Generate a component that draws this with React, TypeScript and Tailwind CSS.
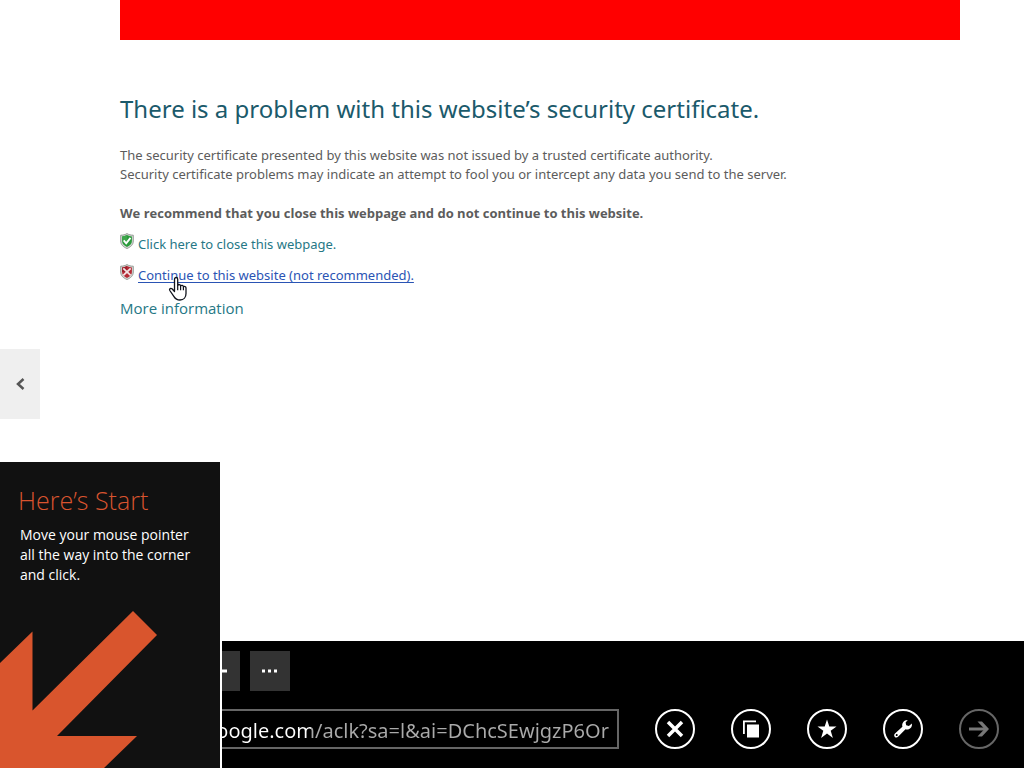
import type { ReactNode } from "react";

function ShieldIcon({ kind }: { kind: "ok" | "bad" }) {
  const ok = kind === "ok";
  return (
    <svg viewBox="0 0 14 16" className="-mt-0.5 h-4 w-3.5 shrink-0" aria-hidden="true">
      <path d="M7 .6C5 1.8 3 2.2.7 2.2V8c0 3.600 2.400 5.900 6.300 7.500 3.900-1.600 6.300-3.900 6.300-7.500V2.200C11 2.200 9 1.800 7 .6Z" fill="#d4d8d4" stroke="#8d938d" strokeWidth=".9" />
      <path d="M7 2.100C5.400 3 3.800 3.400 2.100 3.500V8c0 2.800 1.800 4.600 4.900 5.900 3.100-1.300 4.900-3.100 4.900-5.900V3.500C10.200 3.400 8.600 3 7 2.100Z" fill={ok ? "#2b9a3c" : "#b52a35"} />
      <path d="M7 2.100C5.400 3 3.800 3.400 2.100 3.500V8H7Z" fill={ok ? "#3ea64b" : "#9d1f2b"} />
      {ok ? (
        <path d="m3.700 7.400 2.500 2.900 4.300-5.500" fill="none" stroke="#fff" strokeWidth="1.900" />
      ) : (
        <path d="m3.300 4.300 7.400 7M10.700 4.300l-7.400 7" fill="none" stroke="#f3e4e4" strokeWidth="1.800" />
      )}
    </svg>
  );
}

function HandCursor() {
  return (
    <svg viewBox="0 0 20 26" className="absolute top-2.5 left-[30px] h-[26px] w-5" aria-hidden="true">
      <path
        d="M6.500 15.500V3.200c0-2.300 3.200-2.300 3.200 0v6.300c.6-1.500 2.800-1.200 2.900.4.900-1.100 2.700-.6 2.800.9 1-.8 2.600-.1 2.600 1.300v5.300c0 3.800-2.200 6.600-6 6.600-3 0-4.700-1.200-6-3.400l-4.200-6.100c-.9-1.600 1-2.800 2.200-1.700Z"
        fill="#fff"
        stroke="#10131c"
        strokeWidth="1.300"
        strokeLinejoin="round"
      />
      <path d="M9.700 9.500v4.700M12.600 10v4.200M15.400 11v3.200" stroke="#10131c" strokeWidth="1.200" />
    </svg>
  );
}

function RoundButton({ label, disabled, children }: { label: string; disabled?: boolean; children: ReactNode }) {
  return (
    <button
      type="button"
      aria-label={label}
      disabled={disabled}
      className="flex size-10 shrink-0 items-center justify-center rounded-full border-2 border-white text-white disabled:border-[#666] disabled:text-[#777]"
    >
      <svg viewBox="0 0 20 20" className="size-5" aria-hidden="true">
        {children}
      </svg>
    </button>
  );
}

function StartTip() {
  return (
    <aside className="absolute bottom-0 left-0 h-[306px] w-[222px] overflow-hidden border-r-2 border-white bg-[#111] text-white">
      <div className="px-5 pt-5">
        <h2 className="-ml-0.5 text-[25px] leading-9 font-light text-[#d9542f]">Here’s Start</h2>
        <p className="mt-[7px] text-sm leading-5">
          Move your mouse pointer
          <br />
          all the way into the corner
          <br />
          and click.
        </p>
      </div>
      <svg viewBox="0 0 160 157" className="absolute bottom-0 left-0 h-[157px] w-40" aria-hidden="true">
        <path d="M133 0 157 24 57 125h80l-33 32H0V52l32.500-31.500v79Z" fill="#d9552d" />
      </svg>
    </aside>
  );
}

export default function App() {
  return (
    <div className="relative flex min-h-screen flex-col bg-white font-['Open_Sans','Noto_Sans',sans-serif]">
      <main className="flex-1 pr-16 pl-[120px] font-['Noto_Sans','Open_Sans',sans-serif] text-[13px] text-[#5c5c5c]">
        <div className="h-10 bg-[#ff0000]" />
        <h1 className="mt-[49px] text-2xl leading-10 font-normal text-[#1b5a6b]">
          There is a problem with this website’s security certificate.
        </h1>
        <p className="mt-[17px] leading-[19px]">
          The security certificate presented by this website was not issued by a trusted certificate authority.
          <br />
          Security certificate problems may indicate an attempt to fool you or intercept any data you send to the server.
        </p>
        <p className="mt-5 font-['Open_Sans','Noto_Sans',sans-serif] leading-[19px] font-bold">
          We recommend that you close this webpage and do not continue to this website.
        </p>
        <ul className="mt-3 flex flex-col gap-3">
          <li className="flex gap-1 leading-[19px]">
            <ShieldIcon kind="ok" />
            <a href="#close" className="text-[#267886]">Click here to close this webpage.</a>
          </li>
          <li className="flex gap-1 leading-[19px]">
            <ShieldIcon kind="bad" />
            <span className="relative">
              <a href="#continue" className="text-[#2a54b4] underline underline-offset-2">
                Continue to this website (not recommended).
              </a>
              <HandCursor />
            </span>
          </li>
        </ul>
        <a href="#more" className="mt-[11px] inline-block font-['Open_Sans','Noto_Sans',sans-serif] text-[15px] leading-6 text-[#267886]">
          More information
        </a>
      </main>

      <button
        type="button"
        aria-label="Back"
        className="absolute top-1/2 left-0 flex h-[70px] w-10 -translate-y-1/2 items-center justify-center bg-[#efefef]"
      >
        <svg viewBox="0 0 10 12" className="h-3 w-2.5" aria-hidden="true">
          <path d="M8.500 1 3 6l5.500 5" fill="none" stroke="#555" strokeWidth="2.500" />
        </svg>
      </button>

      <footer className="bg-black pt-2.5 pr-[25px] pb-[19px] pl-[200px]">
        <div className="flex gap-2.5">
          <button type="button" aria-label="New tab" className="flex size-10 items-center justify-center bg-[#333]">
            <svg viewBox="0 0 14 14" className="size-3.5" aria-hidden="true">
              <path d="M0 7h14M7 0v14" stroke="#fff" strokeWidth="3" />
            </svg>
          </button>
          <button type="button" aria-label="Tab tools" className="flex size-10 items-center justify-center bg-[#333]">
            <svg viewBox="0 0 16 4" className="h-1 w-4" aria-hidden="true">
              <path d="M0 .5h3v3H0zM6 .5h3v3H6zM12 .5h3v3h-3z" fill="#fff" />
            </svg>
          </button>
        </div>
        <div className="mt-[18px] flex items-center gap-9">
          <input
            type="text"
            aria-label="Address"
            defaultValue="google.com/aclk?sa=l&ai=DChcSEwjgzP6Or"
            className="h-10 min-w-0 flex-1 border-2 border-[#666] bg-linear-to-r from-white from-[109px] to-[#aaa] to-[109px] bg-clip-text px-0.5 pt-0.5 font-['Noto_Sans','Open_Sans',sans-serif] text-xl text-transparent"
          />
          <RoundButton label="Stop">
            <path d="m3 3 14 14M17 3 3 17" stroke="currentColor" strokeWidth="3.500" />
          </RoundButton>
          <RoundButton label="Tabs">
            <path d="M2 15V1.500h13v1.800H3.800V15Z" fill="currentColor" />
            <path d="M6 5.500h12v13H6z" fill="currentColor" />
          </RoundButton>
          <RoundButton label="Favorites">
            <path d="m10 .5 2.300 7H19.500l-5.800 4.300 2.200 7.200-5.900-4.400L4.100 19l2.200-7.200L.5 7.500h7.200Z" fill="currentColor" />
          </RoundButton>
          <RoundButton label="Page tools">
            <path
              fillRule="evenodd"
              d="M14.800 1 12.600 3.500l.6 2.700 2.700.7 3-2.300c.5 2.600-.9 5.300-3.700 5.900-1 .2-1.900.1-2.700-.2L5.300 17.600c-1.100 1.100-2.600 1.100-3.500.3-.9-.9-.8-2.400.2-3.300l7.400-6.900C8.600 4.500 10.500 1 14.800 1ZM3.700 15.100a1 1 0 1 0 .1 2 1 1 0 0 0-.1-2Z"
              fill="currentColor"
            />
          </RoundButton>
          <RoundButton label="Forward" disabled>
            <path d="M0 10h18" stroke="currentColor" strokeWidth="3" />
            <path d="M8.500 2.500H13L20 10l-7 7.500H8.500L15.500 10Z" fill="currentColor" />
          </RoundButton>
        </div>
      </footer>

      <StartTip />
    </div>
  );
}
